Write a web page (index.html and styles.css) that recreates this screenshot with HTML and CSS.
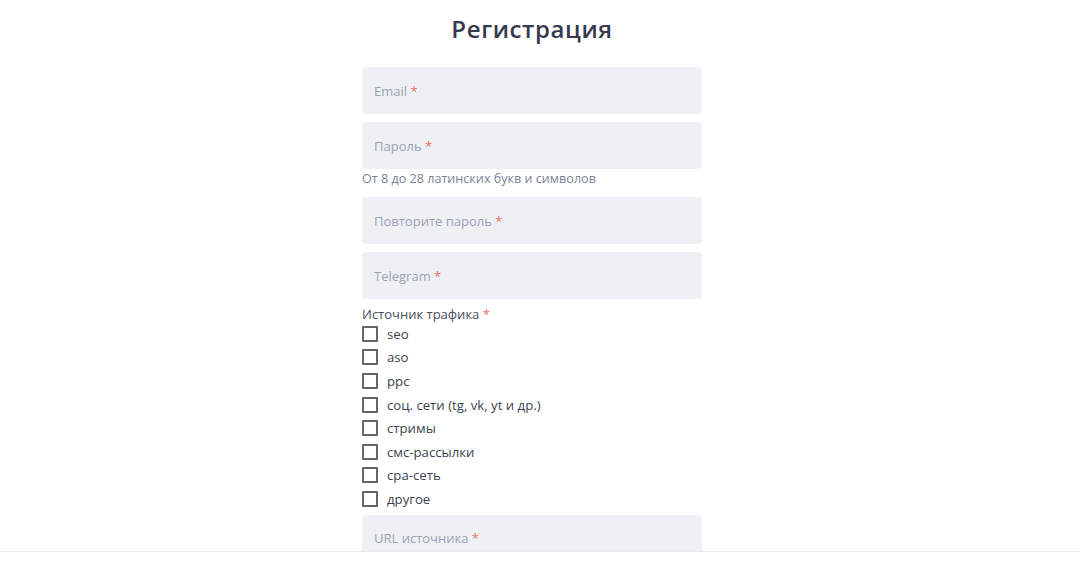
FILE: index.html
```html
<!DOCTYPE html>
<html lang="ru">
<head>
<meta charset="utf-8">
<title>Регистрация</title>
<link rel="stylesheet" href="styles.css">
</head>
<body>
<main class="page">
  <h1 class="title">Регистрация</h1>
  <form class="form">
    <div class="field"><span class="ph">Email <i>*</i></span></div>
    <div class="field"><span class="ph">Пароль <i>*</i></span></div>
    <div class="hint">От 8 до 28 латинских букв и символов</div>
    <div class="field"><span class="ph">Повторите пароль <i>*</i></span></div>
    <div class="field"><span class="ph">Telegram <i>*</i></span></div>
    <div class="group">
      <div class="group-label">Источник трафика <i>*</i></div>
      <label class="check"><span class="box"></span>seo</label>
      <label class="check"><span class="box"></span>aso</label>
      <label class="check"><span class="box"></span>ppc</label>
      <label class="check"><span class="box"></span>соц. сети (tg, vk, yt и др.)</label>
      <label class="check"><span class="box"></span>стримы</label>
      <label class="check"><span class="box"></span>смс-рассылки</label>
      <label class="check"><span class="box"></span>cpa-сеть</label>
      <label class="check"><span class="box"></span>другое</label>
    </div>
    <div class="field"><span class="ph">URL источника <i>*</i></span></div>
  </form>
</main>
<div class="bottombar"></div>
</body>
</html>
```
FILE: styles.css
```css
html, body {
  margin: 0;
  padding: 0;
  background: #fff;
  height: 100%;
  overflow: hidden;
}
body {
  font-family: "Open Sans", "Noto Sans", sans-serif;
  color: #3c3f4f;
}
.page {
  width: 340px;
  margin: 0 auto;
  padding-top: 12px;
  transform: translateX(-8px);
}
.title {
  margin: 0 0 21px;
  text-align: center;
  font-size: 24px;
  line-height: 34px;
  font-weight: 600;
  color: #363a4e;
  letter-spacing: 0.6px;
}
.form {
  display: flex;
  flex-direction: column;
}
.field {
  height: 47px;
  background: #eff0f4;
  border-radius: 4px;
  display: flex;
  align-items: center;
  padding: 0 12px;
  margin-bottom: 8px;
}
.ph {
  font-size: 13px;
  color: #9aa3b6;
}
i {
  font-style: normal;
  color: #ef6f5e;
}
.hint {
  font-size: 12.6px;
  color: #7c8396;
  margin: -7px 0 9px;
  line-height: 18px;
}
.group {
  display: flex;
  flex-direction: column;
  margin-top: -1px;
  margin-bottom: 4px;
}
.group-label {
  font-size: 13px;
  color: #4a4d5a;
  line-height: 16px;
}
.check {
  display: flex;
  align-items: center;
  gap: 9px;
  height: 23.6px;
  font-size: 13.2px;
  color: #3c3f4f;
}
.box {
  width: 12px;
  height: 12px;
  border: 2px solid #666;
  border-radius: 1px;
  box-sizing: content-box;
  flex: none;
}
.bottombar {
  position: fixed;
  left: 0;
  right: 0;
  bottom: 0;
  height: 20px;
  background: #fff;
  border-top: 1px solid #ececec;
}
```
